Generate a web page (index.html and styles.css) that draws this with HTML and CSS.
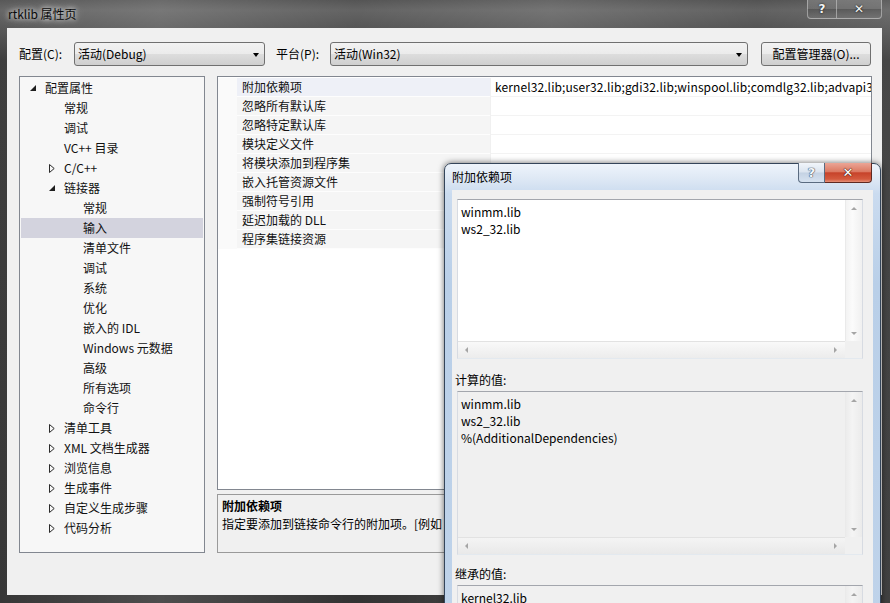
FILE: index.html
```html
<!DOCTYPE html>
<html lang="zh-CN">
<head>
<meta charset="utf-8">
<title>rtklib 属性页</title>
<link rel="stylesheet" href="styles.css">
</head>
<body>
<div class="main-win">
  <div class="titlebar">
    <span class="title">rtklib 属性页</span>
    <div class="caption-btns">
      <div class="cbtn help">?</div>
      <div class="cbtn close">✕</div>
    </div>
  </div>
  <div class="client">
    <div class="toolbar">
      <span class="lbl lbl-cfg">配置(C):</span>
      <div class="combo combo-cfg"><span>活动(Debug)</span><span class="dd"></span></div>
      <span class="lbl lbl-plat">平台(P):</span>
      <div class="combo combo-plat"><span>活动(Win32)</span><span class="dd"></span></div>
      <div class="button">配置管理器(O)...</div>
    </div>
    <div class="panes">
      <div class="tree">
        <div class="node l0"><span class="tw"><svg width="6" height="6" viewBox="0 0 6 6"><path d="M6 0L6 6L0 6Z" fill="#1e1e1e"/></svg></span>配置属性</div>
        <div class="node l1"><span class="tw"></span>常规</div>
        <div class="node l1"><span class="tw"></span>调试</div>
        <div class="node l1"><span class="tw"></span>VC++ 目录</div>
        <div class="node l1"><span class="tw"><svg width="6" height="9" viewBox="0 0 6 9"><path d="M0.5 0.5L5.2 4.5L0.5 8.5Z" fill="none" stroke="#2a2a2a"/></svg></span>C/C++</div>
        <div class="node l1"><span class="tw"><svg width="6" height="6" viewBox="0 0 6 6"><path d="M6 0L6 6L0 6Z" fill="#1e1e1e"/></svg></span>链接器</div>
        <div class="node l2"><span class="tw"></span>常规</div>
        <div class="node l2 sel"><span class="tw"></span>输入</div>
        <div class="node l2"><span class="tw"></span>清单文件</div>
        <div class="node l2"><span class="tw"></span>调试</div>
        <div class="node l2"><span class="tw"></span>系统</div>
        <div class="node l2"><span class="tw"></span>优化</div>
        <div class="node l2"><span class="tw"></span>嵌入的 IDL</div>
        <div class="node l2"><span class="tw"></span>Windows 元数据</div>
        <div class="node l2"><span class="tw"></span>高级</div>
        <div class="node l2"><span class="tw"></span>所有选项</div>
        <div class="node l2"><span class="tw"></span>命令行</div>
        <div class="node l1"><span class="tw"><svg width="6" height="9" viewBox="0 0 6 9"><path d="M0.5 0.5L5.2 4.5L0.5 8.5Z" fill="none" stroke="#2a2a2a"/></svg></span>清单工具</div>
        <div class="node l1"><span class="tw"><svg width="6" height="9" viewBox="0 0 6 9"><path d="M0.5 0.5L5.2 4.5L0.5 8.5Z" fill="none" stroke="#2a2a2a"/></svg></span>XML 文档生成器</div>
        <div class="node l1"><span class="tw"><svg width="6" height="9" viewBox="0 0 6 9"><path d="M0.5 0.5L5.2 4.5L0.5 8.5Z" fill="none" stroke="#2a2a2a"/></svg></span>浏览信息</div>
        <div class="node l1"><span class="tw"><svg width="6" height="9" viewBox="0 0 6 9"><path d="M0.5 0.5L5.2 4.5L0.5 8.5Z" fill="none" stroke="#2a2a2a"/></svg></span>生成事件</div>
        <div class="node l1"><span class="tw"><svg width="6" height="9" viewBox="0 0 6 9"><path d="M0.5 0.5L5.2 4.5L0.5 8.5Z" fill="none" stroke="#2a2a2a"/></svg></span>自定义生成步骤</div>
        <div class="node l1"><span class="tw"><svg width="6" height="9" viewBox="0 0 6 9"><path d="M0.5 0.5L5.2 4.5L0.5 8.5Z" fill="none" stroke="#2a2a2a"/></svg></span>代码分析</div>
      </div>
      <div class="rightcol">
        <div class="grid">
          <div class="prow sel"><div class="pname">附加依赖项</div><div class="pval">kernel32.lib;user32.lib;gdi32.lib;winspool.lib;comdlg32.lib;advapi32.lib;shell32.lib;ole32.lib;oleaut32.lib</div></div>
          <div class="prow"><div class="pname">忽略所有默认库</div><div class="pval"></div></div>
          <div class="prow"><div class="pname">忽略特定默认库</div><div class="pval"></div></div>
          <div class="prow"><div class="pname">模块定义文件</div><div class="pval"></div></div>
          <div class="prow"><div class="pname">将模块添加到程序集</div><div class="pval"></div></div>
          <div class="prow"><div class="pname">嵌入托管资源文件</div><div class="pval"></div></div>
          <div class="prow"><div class="pname">强制符号引用</div><div class="pval"></div></div>
          <div class="prow"><div class="pname">延迟加载的 DLL</div><div class="pval"></div></div>
          <div class="prow"><div class="pname">程序集链接资源</div><div class="pval"></div></div>
        </div>
        <div class="desc">
          <div class="desc-title">附加依赖项</div>
          <div class="desc-text">指定要添加到链接命令行的附加项。[例如 kernel32.lib]</div>
        </div>
      </div>
    </div>
  </div>
</div>

<div class="dialog">
  <div class="dtitle">
    <span class="dtitle-text">附加依赖项</span>
    <div class="dcaption">
      <div class="dbtn dhelp">?</div>
      <div class="dbtn dclose">✕</div>
    </div>
  </div>
  <div class="dclient">
    <div class="ebox edit">
      <div class="etext">winmm.lib<br>ws2_32.lib</div>
      <div class="vscroll"><span class="ar up"></span><span class="ar down"></span></div>
      <div class="hscroll"><span class="ar left"></span><span class="ar right"></span></div>
      <div class="corner"></div>
    </div>
    <div class="flabel first">计算的值:</div>
    <div class="ebox ro">
      <div class="etext">winmm.lib<br>ws2_32.lib<br>%(AdditionalDependencies)</div>
      <div class="vscroll"><span class="ar up"></span><span class="ar down"></span></div>
      <div class="hscroll"><span class="ar left"></span><span class="ar right"></span></div>
      <div class="corner"></div>
    </div>
    <div class="flabel">继承的值:</div>
    <div class="ebox ro">
      <div class="etext">kernel32.lib<br>user32.lib<br>gdi32.lib</div>
      <div class="vscroll"><span class="ar up"></span><span class="ar down"></span></div>
      <div class="hscroll"><span class="ar left"></span><span class="ar right"></span></div>
      <div class="corner"></div>
    </div>
  </div>
</div>
</body>
</html>
```

FILE: styles.css
```css
html, body {
  margin: 0;
  padding: 0;
}
body {
  width: 890px;
  height: 603px;
  overflow: hidden;
  position: relative;
  background: #2b2b2b;
  font-family: "Noto Sans CJK SC", "Noto Sans", sans-serif;
  font-size: 12px;
  color: #000;
}

/* ---------- main window ---------- */
.main-win {
  width: 890px;
  height: 603px;
  box-sizing: border-box;
  padding: 0 8px 8px 7px;
  display: flex;
  flex-direction: column;
  background:
    linear-gradient(90deg, rgba(255,255,255,0.08) 0, rgba(255,255,255,0.18) 18%, rgba(255,255,255,0.06) 40%, rgba(255,255,255,0.16) 62%, rgba(255,255,255,0.05) 85%, rgba(255,255,255,0.12) 100%),
    linear-gradient(180deg, #4a4a4a 0, #5a5a5a 10px, #4c4c4c 27px, #2e2e2e 60px, #262626 100%);
}
.titlebar {
  height: 28px;
  display: flex;
  align-items: flex-start;
}
.title {
  margin-left: 1px;
  line-height: 28px;
  font-size: 12px;
  color: #0a0a0a;
  text-shadow: 0 0 5px rgba(255,255,255,0.9), 0 0 8px rgba(255,255,255,0.7);
}
.caption-btns {
  margin-left: auto;
  display: flex;
  height: 20px;
}
.cbtn {
  height: 19px;
  box-sizing: border-box;
  border: 1px solid rgba(210,210,210,0.55);
  border-top: none;
  background: linear-gradient(180deg, rgba(255,255,255,0.18), rgba(255,255,255,0.06) 50%, rgba(0,0,0,0.15) 51%, rgba(255,255,255,0.08));
  color: #f4f4f4;
  font-family: "DejaVu Sans", sans-serif;
  font-weight: bold;
  text-align: center;
  line-height: 18px;
  text-shadow: 0 0 2px #000;
}
.cbtn.help {
  width: 30px;
  border-radius: 0 0 0 4px;
  font-size: 12px;
}
.cbtn.close {
  width: 45px;
  border-left: none;
  border-radius: 0 0 4px 0;
  font-size: 12px;
}

.client {
  flex: 1;
  background: #f0f0f0;
  padding: 14px 10px 0 12px;
  display: flex;
  flex-direction: column;
}

/* ---------- toolbar ---------- */
.toolbar {
  display: flex;
  align-items: center;
  height: 24px;
}
.lbl {
  line-height: 24px;
  white-space: nowrap;
}
.lbl-cfg { width: 55px; }
.lbl-plat { width: 54px; margin-left: 11px; }
.combo {
  box-sizing: border-box;
  height: 24px;
  border: 1px solid #707070;
  border-radius: 3px;
  background: linear-gradient(180deg, #f2f2f2 0, #ebebeb 50%, #dddddd 51%, #cfcfcf 100%);
  display: flex;
  align-items: center;
  padding: 0 5px 0 3px;
  line-height: 22px;
}
.combo span:first-child { flex: 1; }
.combo-cfg { width: 191px; }
.combo-plat { width: 418px; }
.dd {
  width: 0;
  height: 0;
  border-left: 3.5px solid transparent;
  border-right: 3.5px solid transparent;
  border-top: 4px solid #000;
  margin-top: 1px;
}
.button {
  box-sizing: border-box;
  width: 110px;
  height: 24px;
  margin-left: 13px;
  border: 1px solid #707070;
  border-radius: 3px;
  background: linear-gradient(180deg, #f2f2f2 0, #ebebeb 50%, #dddddd 51%, #cfcfcf 100%);
  text-align: center;
  line-height: 22px;
  white-space: nowrap;
}

/* ---------- panes ---------- */
.panes {
  display: flex;
  margin-top: 10px;
  gap: 12px;
}
.tree {
  box-sizing: border-box;
  width: 186px;
  height: 477px;
  border: 1px solid #828790;
  background: #f7f7f7;
  padding-top: 1px;
}
.node {
  height: 20px;
  line-height: 20px;
  display: flex;
  align-items: center;
  white-space: nowrap;
  color: #111;
}
.node.l0 { padding-left: 10px; }
.node.l1 { padding-left: 29px; }
.node.l2 { padding-left: 48px; }
.node.sel {
  background: #d3d3de;
  margin: 0 1px;
  padding-left: 47px;
}
.tw {
  width: 15px;
  height: 20px;
  display: flex;
  align-items: center;
  flex-shrink: 0;
}

.rightcol {
  width: 655px;
  display: flex;
  flex-direction: column;
}
.grid {
  box-sizing: border-box;
  height: 414px;
  border: 1px solid #828790;
  background: #fff;
  padding-top: 1px;
}
.prow {
  display: grid;
  grid-template-columns: 272px 1fr;
  height: 19px;
  background: #fafafa;
}
.pname {
  margin-left: 19px;
  padding-left: 5px;
  line-height: 18px;
  background: #f5f5f5;
  border-bottom: 1px solid #fdfdfd;
  white-space: nowrap;
  color: #111;
}
.prow.sel .pname { background: #eef0f7; }
.pval {
  background: #fff;
  border-left: 1px solid #f0f0f0;
  border-bottom: 1px solid #f3f3f3;
  padding-left: 4px;
  line-height: 18px;
  white-space: nowrap;
  overflow: hidden;
  letter-spacing: 0.1px;
}
.desc {
  box-sizing: border-box;
  margin-top: 4px;
  height: 59px;
  border: 1px solid #9a9a9a;
  background: #f0f0f0;
  padding: 2px 4px;
  white-space: nowrap;
  overflow: hidden;
}
.desc-title {
  font-weight: bold;
  line-height: 18px;
}
.desc-text {
  line-height: 18px;
}

/* ---------- dialog ---------- */
.dialog {
  position: absolute;
  left: 444px;
  top: 163px;
  width: 437px;
  height: 470px;
  box-sizing: border-box;
  border: 1px solid #34455a;
  border-radius: 7px 7px 0 0;
  padding: 0 7px;
  display: flex;
  flex-direction: column;
  background: linear-gradient(180deg, #eef4fb 0, #dfe9f5 14px, #cadbef 30px, #b9cfe8 120px, #bfd3ea 100%);
  box-shadow: 0 0 6px rgba(0,0,0,0.6);
}
.dtitle {
  height: 29px;
  display: flex;
  align-items: flex-start;
}
.dtitle-text {
  line-height: 26px;
  color: #000;
}
.dcaption {
  margin-left: auto;
  margin-right: 1px;
  margin-top: -1px;
  display: flex;
}
.dbtn {
  height: 20px;
  box-sizing: border-box;
  border: 1px solid #5a6b80;
  border-top: none;
  text-align: center;
  font-family: "DejaVu Sans", sans-serif;
  font-weight: bold;
  line-height: 19px;
}
.dhelp {
  width: 27px;
  border-radius: 0 0 0 4px;
  background: linear-gradient(180deg, #f1f5fa 0, #dbe4ef 48%, #c4d2e3 52%, #d6e2f0 100%);
  color: #f4f7fb;
  font-size: 13px;
  text-shadow: 0 0 1px #3d4f66, 0 0 1px #3d4f66, 0 0 1px #3d4f66;
}
.dclose {
  width: 47px;
  border-left: none;
  border-color: #5e2a22;
  border-radius: 0 0 4px 0;
  background: linear-gradient(180deg, #eba596 0, #dc7a63 45%, #c7432a 52%, #d45a3e 85%, #e5917a 100%);
  color: #fff;
  font-size: 13px;
  text-shadow: 0 0 1px #4b1a10, 0 0 1px #4b1a10, 0 0 1px #4b1a10;
}
.dclient {
  flex: 1;
  background: #f0f0f0;
  padding: 9px 10px 0 5px;
  display: flex;
  flex-direction: column;
}
.ebox {
  box-sizing: border-box;
  height: 160px;
  flex-shrink: 0;
  border: 1px solid;
  border-color: #a3a6ad #d7dbe2 #e3e9ef #d7dbe2;
  display: grid;
  grid-template-columns: 1fr 17px;
  grid-template-rows: 1fr 17px;
  background: #fff;
}
.ebox.ro { height: 164px; background: #f0f0f0; }
.etext {
  padding: 3px 3px 0;
  line-height: 17px;
  white-space: nowrap;
  overflow: hidden;
}
.vscroll {
  display: flex;
  flex-direction: column;
  justify-content: space-between;
  align-items: center;
  padding: 7px 0 6px;
  background: linear-gradient(90deg, #f3f3f3, #fbfbfb 40%, #f0f0f0);
  border-left: 1px solid #eaeaea;
}
.hscroll {
  display: flex;
  justify-content: space-between;
  align-items: center;
  padding: 0 8px 0 7px;
  background: linear-gradient(180deg, #f9f9f9, #ececec);
  border-top: 1px solid #e2e2e2;
}
.ebox.ro .vscroll { background: linear-gradient(90deg, #ececec, #f4f4f4 40%, #ebebeb); }
.ebox.ro .hscroll { background: linear-gradient(180deg, #f4f4f4, #e9e9e9); }
.corner { background: #f0f0f0; }
.ar {
  width: 0;
  height: 0;
}
.ar.up {
  border-left: 3px solid transparent;
  border-right: 3px solid transparent;
  border-bottom: 3px solid #a5a5a5;
}
.ar.down {
  border-left: 3px solid transparent;
  border-right: 3px solid transparent;
  border-top: 3px solid #a5a5a5;
}
.ar.left {
  border-top: 3px solid transparent;
  border-bottom: 3px solid transparent;
  border-right: 3px solid #a5a5a5;
}
.ar.right {
  border-top: 3px solid transparent;
  border-bottom: 3px solid transparent;
  border-left: 3px solid #a5a5a5;
}
.flabel {
  margin-left: -2px;
  padding: 10px 0 3px;
  line-height: 17px;
}
.flabel.first { padding-top: 12px; padding-bottom: 3px; }
```
